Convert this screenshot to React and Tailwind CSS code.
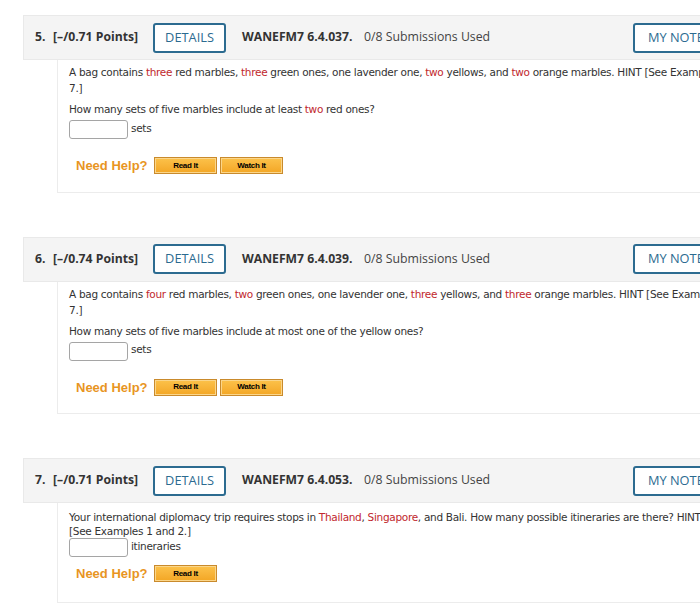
import React from "react";

const Red = ({ children }) => <span className="text-[#c1272d]">{children}</span>;

const HelpButton = ({ label }) => (
    <button className="h-[17px] w-[63px] bg-gradient-to-b from-[#fcc24a] to-[#f3a623] border border-[#c98a2c] shadow-[inset_0_0_0_1px_#fbd68a] text-[8px] font-bold text-black font-['Liberation_Sans',Arial,sans-serif] leading-none">
        {label}
    </button>
);

const Question = ({ num, points, code, tight, children, answerUnit, watch = true }) => (
    <div className="flex flex-col">
        {/* header bar */}
        <div className="h-[45px] flex items-center bg-[#f4f4f4] border border-[#e9e9e9] pl-[11px] font-['Open_Sans',sans-serif] text-[#333]">
            <span className="text-[12.2px] font-bold w-[18px]">{num}.</span>
            <span className="text-[12.2px] font-bold w-[100px]">[–/{points} Points]</span>
            <button className="h-[30px] w-[73px] border-2 border-[#2c6b90] rounded-[3px] bg-white text-[#2c6b90] text-[12.8px]">
                DETAILS
            </button>
            <span className="ml-[16px] text-[12.2px] font-bold w-[122px]">{code}</span>
            <span className="text-[12.3px] text-[#444] w-[269px]">0/8 Submissions Used</span>
            <button className="h-[30px] w-[90px] border-2 border-[#2c6b90] rounded-[3px] bg-white text-[#2c6b90] text-[12.8px] text-left pl-[13px]">
                MY NOTES
            </button>
        </div>
        {/* body */}
        <div className={`ml-[34px] border-l border-b border-[#ececec] pl-[11px] font-['DejaVu_Sans',Verdana,sans-serif] text-[10.5px] tracking-[-0.3px] text-[#333] ${tight ? "pt-[7px] pb-[18px]" : "pt-[4px] pb-[16px]"}`}>
            {children}
            <div className={`flex items-center ${tight ? "" : "mt-[3px]"}`}>
                <div className="w-[59px] h-[19px] border border-[#a5a5a5] rounded-[3px] bg-white" />
                <span className="ml-[3px] -mt-[2px]">{answerUnit}</span>
            </div>
            <div className={`flex items-center ml-[7px] ${tight ? "mt-[7px]" : "mt-[17px]"}`}>
                <span className="text-[13px] font-bold text-[#e8951f] font-['Liberation_Sans',Arial,sans-serif] tracking-normal w-[78px]">Need Help?</span>
                <HelpButton label="Read It" />
                {watch && (
                    <span className="ml-[3px] flex">
                        <HelpButton label="Watch It" />
                    </span>
                )}
            </div>
        </div>
    </div>
);

const App = () => {
    return (
        <div className="w-[700px] h-[608px] overflow-hidden bg-white">
            <div className="w-[780px] pl-[23px] pt-[15px] flex flex-col gap-[44px]">
                <Question num="5" points="0.71" code="WANEFM7 6.4.037." answerUnit="sets">
                    <div className="leading-[16px] whitespace-nowrap">
                        A bag contains <Red>three</Red> red marbles, <Red>three</Red> green ones, one lavender one, <Red>two</Red> yellows, and <Red>two</Red> orange marbles. HINT [See Examples 6 and
                    </div>
                    <div className="leading-[16px]">7.]</div>
                    <div className="leading-[16px] mt-[5px]">
                        How many sets of five marbles include at least <Red>two</Red> red ones?
                    </div>
                </Question>
                <Question num="6" points="0.74" code="WANEFM7 6.4.039." answerUnit="sets">
                    <div className="leading-[16px] whitespace-nowrap">
                        A bag contains <Red>four</Red> red marbles, <Red>two</Red> green ones, one lavender one, <Red>three</Red> yellows, and <Red>three</Red> orange marbles. HINT [See Examples 6 and
                    </div>
                    <div className="leading-[16px]">7.]</div>
                    <div className="leading-[16px] mt-[5px]">
                        How many sets of five marbles include at most one of the yellow ones?
                    </div>
                </Question>
                <Question num="7" points="0.71" code="WANEFM7 6.4.053." answerUnit="itineraries" tight watch={false}>
                    <div className="leading-[14px] whitespace-nowrap">
                        Your international diplomacy trip requires stops in <Red>Thailand</Red>, <Red>Singapore</Red>, and Bali. How many possible itineraries are there? HINT
                    </div>
                    <div className="leading-[14px]">[See Examples 1 and 2.]</div>
                </Question>
            </div>
        </div>
    );
};

export default App;
